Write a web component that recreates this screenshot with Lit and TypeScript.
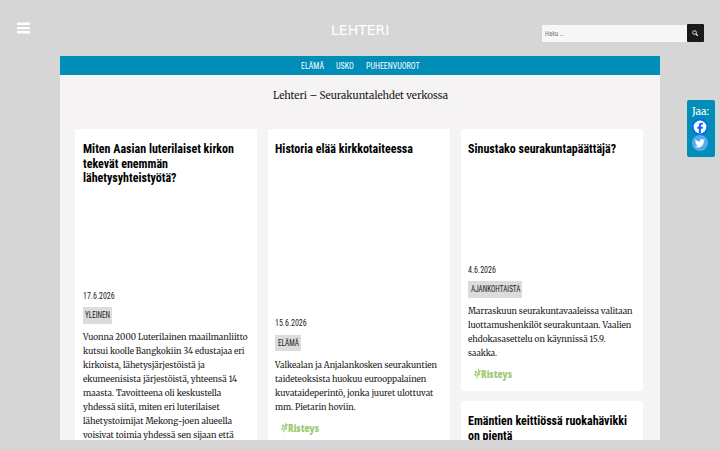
import { LitElement, html, css, svg } from "lit";
import { customElement, property } from "lit/decorators.js";

type Line = [text: string, width: number];

interface Article {
  title: Line[];
  imageHeight: number;
  date?: Line;
  category?: Line;
  excerpt?: Line[];
  logo?: boolean;
}

const COLUMNS: Article[][] = [
  [
    {
      title: [
        ["Miten Aasian luterilaiset kirkon", 151],
        ["tekevät enemmän", 85],
        ["lähetysyhteistyötä?", 93.5],
      ],
      imageHeight: 103.4,
      date: ["17.6.2026", 31.7],
      category: ["YLEINEN", 25],
      excerpt: [
        ["Vuonna 2000 Luterilainen maailmanliitto", 164.5],
        ["kutsui koolle Bangkokiin 34 edustajaa eri", 161.5],
        ["kirkoista, lähetysjärjestöistä ja", 121.7],
        ["ekumeenisista järjestöistä, yhteensä 14", 154],
        ["maasta. Tavoitteena oli keskustella", 138.3],
        ["yhdessä siitä, miten eri luterilaiset", 136.7],
        ["lähetystoimijat Mekong-joen alueella", 149],
        ["voisivat toimia yhdessä sen sijaan että", 150.7],
      ],
    },
  ],
  [
    {
      title: [["Historia elää kirkkotaiteessa", 138]],
      imageHeight: 159.9,
      date: ["15.6.2026", 31.7],
      category: ["ELÄMÄ", 21],
      excerpt: [
        ["Valkealan ja Anjalankosken seurakuntien", 162],
        ["taideteoksista huokuu eurooppalainen", 151.3],
        ["kuvataideperintö, jonka juuret ulottuvat", 158.3],
        ["mm. Pietarin hoviin.", 80.7],
      ],
      logo: true,
    },
  ],
  [
    {
      title: [["Sinustako seurakuntapäättäjä?", 148]],
      imageHeight: 106.1,
      date: ["4.6.2026", 28],
      category: ["AJANKOHTAISTA", 49.5],
      excerpt: [
        ["Marraskuun seurakuntavaaleissa valitaan", 164.5],
        ["luottamushenkilöt seurakuntaan. Vaalien", 163.3],
        ["ehdokasasettelu on käynnissä 15.9.", 137.5],
        ["saakka.", 29],
      ],
      logo: true,
    },
    {
      title: [
        ["Emäntien keittiössä ruokahävikki", 159],
        ["on pientä", 44.3],
      ],
      imageHeight: 100,
    },
  ],
];

const NAV: Line[] = [
  ["ELÄMÄ", 23],
  ["USKO", 17.7],
  ["PUHEENVUOROT", 53.7],
];

// One line of text, condensed or stretched to a set measure
@customElement("fit-line")
class FitLine extends LitElement {
  @property({ type: String }) text = "";
  @property({ type: Number }) width = 0;

  static styles = css`
    :host {
      display: block;
      white-space: nowrap;
    }

    .text {
      display: inline-block;
      vertical-align: top;
      transform-origin: 0 50%;
    }
  `;

  updated() {
    const el = this.renderRoot.querySelector(".text") as HTMLElement;
    const natural = el.getBoundingClientRect().width;
    this.style.width = `${this.width}px`;
    if (natural) {
      el.style.transform = `scaleX(${this.width / natural})`;
    }
  }

  render() {
    return html`<span class="text">${this.text}</span>`;
  }
}

const line = ([text, width]: Line) =>
  html`<fit-line .text=${text} .width=${width}></fit-line>`;

@customElement("article-card")
class ArticleCard extends LitElement {
  @property({ attribute: false }) article!: Article;

  static styles = css`
    :host {
      display: block;
      box-sizing: border-box;
      padding: 13.2px 7.4px 9.2px;
      background: #fff;
      color: #000;
      font-family: "Roboto Condensed", Roboto, sans-serif;
      font-stretch: 75%;
    }

    h2 {
      margin: 0;
      font-size: 12px;
      line-height: 14.4px;
      font-weight: 700;
    }

    .date {
      font-size: 9px;
      line-height: 14px;
      color: #1a1a1a;
    }

    .category {
      width: fit-content;
      margin: 4.4px 0 6.6px;
      padding: 1px 2.2px 0;
      background: #dcdcdc;
      font-size: 8.6px;
      line-height: 15.6px;
      color: #1a1a1a;
    }

    .excerpt {
      font-family: Merriweather, "DejaVu Serif", serif;
      font-stretch: normal;
      font-size: 8.7px;
      line-height: 14px;
      color: #1a1a1a;
    }

    .logo {
      display: flex;
      align-items: center;
      margin: 5px 0 0 5.4px;
      height: 17px;
      gap: 0.5px;
      font-family: "Open Sans", sans-serif;
      font-stretch: normal;
      font-size: 10px;
      font-weight: 800;
      color: #9cc972;
    }

    .logo svg {
      width: 7px;
      height: 11px;
    }
  `;

  render() {
    const a = this.article;
    return html`
      <h2>${a.title.map(line)}</h2>
      <div style="height: ${a.imageHeight}px"></div>
      ${a.date ? html`<div class="date">${line(a.date)}</div>` : ""}
      ${a.category ? html`<div class="category">${line(a.category)}</div>` : ""}
      ${a.excerpt
        ? html`<div class="excerpt">${a.excerpt.map(line)}</div>`
        : ""}
      ${a.logo
        ? html`<div class="logo">
            <svg viewBox="0 0 7 11" fill="currentColor">
              <path d="M4.4.8 5.3 1 3.1 10.4 2.2 10.2z" />
              <path
                d="M2.9 5.6C1.2 5.4.5 4 .9 2.2 2.6 2.6 3.4 3.9 2.9 5.6ZM2.5 8.2C.9 8.2.1 7 .2 5.4 1.8 5.5 2.8 6.6 2.5 8.2ZM4.3 5C4.1 3.4 5 2.3 6.7 2 7 3.7 6 4.9 4.3 5ZM3.7 7.8C3.6 6.2 4.5 5.2 6.2 5 6.4 6.6 5.4 7.7 3.7 7.8Z"
              />
            </svg>
            ${line(["Risteys", 31])}
          </div>`
        : ""}
    `;
  }
}

const facebook = svg`
  <circle cx="12" cy="12" r="12" fill="#0866ff" />
  <circle cx="12" cy="12" r="9.6" fill="#fff" />
  <path fill="#0866ff" d="M10.2 21.5v-6.7H8v-3.1h2.2V10c0-3.1 1.4-4.5 4.3-4.5.6 0 1.5.1 1.9.2v2.7h-1.2c-1.4 0-1.8.6-1.8 1.9v1.4h3l-.5 3.1h-2.5v6.7z" />
`;

const twitter = svg`
  <circle cx="12" cy="12" r="12" fill="#55acee" />
  <path fill="#fff" d="M19.6 7.6c-.6.3-1.2.4-1.8.5.7-.4 1.1-1 1.4-1.7-.6.4-1.3.6-2 .8a3.15 3.15 0 0 0-5.4 2.9c-2.6-.1-4.9-1.4-6.5-3.3-.9 1.5-.4 3.3 1 4.2-.5 0-1-.2-1.4-.4 0 1.5 1.1 2.8 2.5 3.1-.5.1-.9.1-1.4.1.4 1.2 1.6 2.1 2.9 2.2a6.3 6.3 0 0 1-4.7 1.3c5.9 3.7 13.4-.3 13.4-7.7v-.4c.8-.4 1.5-1 2-1.6z" />
`;

@customElement("app-root")
class AppRoot extends LitElement {
  static styles = css`
    :host {
      display: flex;
      flex-direction: column;
      position: relative;
      box-sizing: border-box;
      width: 720px;
      height: 450px;
      padding-bottom: 10.5px;
      overflow: hidden;
      background: #d6d6d6;
      font-family: "Roboto Condensed", Roboto, sans-serif;
      font-stretch: 75%;
    }

    header {
      display: grid;
      grid-template-columns: 1fr auto 1fr;
      flex: none;
      height: 56px;
      box-sizing: border-box;
      padding: 22px 16px 0;
    }

    .menu {
      width: 13px;
      height: 12px;
      margin-left: 0.6px;
      fill: #fff;
    }

    .brand {
      margin: 0;
      color: #fff;
      font-family: "DejaVu Sans", sans-serif;
      font-stretch: normal;
      font-size: 14px;
      font-weight: 400;
      line-height: 17px;
    }

    .search {
      display: flex;
      justify-self: end;
      align-items: center;
      height: 18px;
      margin-top: 2.2px;
    }

    .field {
      box-sizing: border-box;
      width: 145px;
      height: 17px;
      padding-left: 3.5px;
      background: #f7f7f7;
      color: #767676;
      font-size: 7.8px;
      line-height: 17px;
    }

    .submit {
      display: flex;
      align-items: center;
      justify-content: center;
      width: 17.5px;
      height: 18px;
      padding: 0;
      border: 0;
      border-radius: 1px;
      background: #1a1a1a;
    }

    .submit svg {
      width: 6.5px;
      height: 6.5px;
    }

    .page {
      flex: 1;
      min-height: 0;
      width: 600px;
      margin: 0 auto;
      overflow: hidden;
      background: #f5f3f4;
    }

    nav {
      display: flex;
      justify-content: center;
      gap: 12px;
      height: 19px;
      background: #008db7;
      color: #fff;
      font-size: 9px;
      line-height: 20.6px;
    }

    .tagline {
      display: flex;
      justify-content: center;
      height: 54px;
      font-family: Merriweather, "DejaVu Serif", serif;
      font-stretch: normal;
      font-size: 10.5px;
      line-height: 42px;
      color: #1a1a1a;
    }

    .columns {
      display: grid;
      grid-template-columns: repeat(3, 181.6px);
      gap: 11.3px;
      align-items: start;
      padding-left: 15.2px;
    }

    .column {
      display: grid;
      gap: 9.8px;
    }

    .share {
      position: absolute;
      top: 100px;
      right: 5px;
      display: flex;
      flex-direction: column;
      align-items: center;
      box-sizing: border-box;
      width: 28px;
      height: 56.5px;
      padding: 5px 1px 0 0;
      border-radius: 2px;
      background: #008db7;
      color: #fff;
      font-family: Merriweather, "DejaVu Serif", serif;
      font-stretch: normal;
      font-size: 9.5px;
      line-height: 14.4px;
    }

    .share svg {
      flex: none;
      width: 16px;
      height: 16px;
      margin-left: -1px;
    }
  `;

  render() {
    return html`
      <header>
        <svg class="menu" viewBox="0 0 13 12">
          <rect y=".5" width="13" height="2.4" rx=".6" />
          <rect y="4.9" width="13" height="2.4" rx=".6" />
          <rect y="9.1" width="13" height="2.4" rx=".6" />
        </svg>
        <h1 class="brand">${line(["LEHTERI", 58.5])}</h1>
        <div class="search">
          <div class="field">${line(["Haku …", 18.5])}</div>
          <button class="submit" aria-label="Haku">
            <svg viewBox="0 0 14 14" fill="none" stroke="#fff" stroke-width="1.8">
              <circle cx="5.5" cy="5.5" r="4" />
              <path d="m8.5 8.5 4.3 4.3" stroke-width="2.4" />
            </svg>
          </button>
        </div>
      </header>
      <div class="page">
        <nav>${NAV.map(line)}</nav>
        <div class="tagline">
          ${line(["Lehteri – Seurakuntalehdet verkossa", 175])}
        </div>
        <div class="columns">
          ${COLUMNS.map(
            (articles) => html`<div class="column">
              ${articles.map(
                (a) => html`<article-card .article=${a}></article-card>`
              )}
            </div>`
          )}
        </div>
      </div>
      <aside class="share">
        ${line(["Jaa:", 17])}
        <svg viewBox="0 0 24 24">${facebook}</svg>
        <svg viewBox="0 0 24 24">${twitter}</svg>
      </aside>
    `;
  }
}
